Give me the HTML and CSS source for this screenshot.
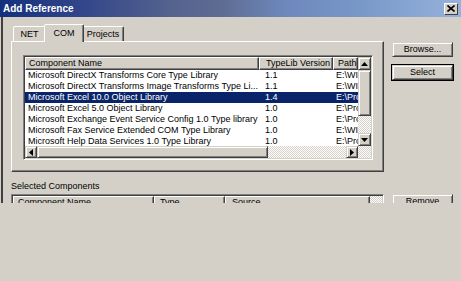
FILE: index.html
```html
<!DOCTYPE html>
<html>
<head>
<meta charset="utf-8">
<link rel="stylesheet" href="styles.css">
</head>
<body>
<div class="dialog">
  <div class="titlebar">
    <span class="title">Add Reference</span>
    <span class="close"><svg width="8" height="7" viewBox="0 0 8 7"><path d="M0.5 0.5 L7.5 6.5 M7.5 0.5 L0.5 6.5" stroke="#000" stroke-width="1.6"/></svg></span>
  </div>
  <div class="body">
    <div class="top">
      <div class="tabctl">
        <div class="tabstrip">
          <div class="tab t-net">NET</div>
          <div class="tab t-com sel">COM</div>
          <div class="tab t-proj">Projects</div>
        </div>
        <div class="panel">
          <div class="listview">
            <div class="lv-main">
              <div class="lv-cols">
                <div class="hdr">
                  <div class="hcell c-name">Component Name</div>
                  <div class="hcell c-ver">TypeLib Version</div>
                  <div class="hcell c-path">Path</div>
                </div>
                <div class="rows">
                  <div class="row"><div class="cell c-name">Microsoft DirectX Transforms Core Type Library</div><div class="cell c-ver">1.1</div><div class="cell c-path">E:\WINNT\System32</div></div>
                  <div class="row"><div class="cell c-name">Microsoft DirectX Transforms Image Transforms Type Li...</div><div class="cell c-ver">1.1</div><div class="cell c-path">E:\WINNT\System32</div></div>
                  <div class="row selected"><div class="cell c-name">Microsoft Excel 10.0 Object Library</div><div class="cell c-ver">1.4</div><div class="cell c-path">E:\Program Files</div></div>
                  <div class="row"><div class="cell c-name">Microsoft Excel 5.0 Object Library</div><div class="cell c-ver">1.0</div><div class="cell c-path">E:\Program Files</div></div>
                  <div class="row"><div class="cell c-name">Microsoft Exchange Event Service Config 1.0 Type library</div><div class="cell c-ver">1.0</div><div class="cell c-path">E:\Program Files</div></div>
                  <div class="row"><div class="cell c-name">Microsoft Fax Service Extended COM Type Library</div><div class="cell c-ver">1.0</div><div class="cell c-path">E:\WINNT\System32</div></div>
                  <div class="row"><div class="cell c-name">Microsoft Help Data Services 1.0 Type Library</div><div class="cell c-ver">1.0</div><div class="cell c-path">E:\Program Files</div></div>
                </div>
              </div>
              <div class="vscroll">
                <div class="sbtn"><svg width="7" height="4" viewBox="0 0 7 4"><path d="M0 4 L3.5 0 L7 4 Z" fill="#000"/></svg></div>
                <div class="vthumb"></div>
                <div class="track"></div>
                <div class="sbtn"><svg width="7" height="4" viewBox="0 0 7 4"><path d="M0 0 L3.5 4 L7 0 Z" fill="#000"/></svg></div>
              </div>
            </div>
            <div class="hs-row">
              <div class="hscroll">
                <div class="sbtn hbtn"><svg width="4" height="7" viewBox="0 0 4 7"><path d="M4 0 L0 3.5 L4 7 Z" fill="#000"/></svg></div>
                <div class="hthumb"></div>
                <div class="track"></div>
                <div class="sbtn hbtn"><svg width="4" height="7" viewBox="0 0 4 7"><path d="M0 0 L4 3.5 L0 7 Z" fill="#000"/></svg></div>
              </div>
              <div class="corner track"></div>
            </div>
          </div>
        </div>
      </div>
      <div class="buttons">
        <div class="btn">Browse...</div>
        <div class="btn default">Select</div>
      </div>
    </div>
    <div class="bottom">
      <div class="sel-col">
        <div class="label">Selected Components</div>
        <div class="list2">
          <div class="hdr2">
            <div class="hcell s-name">Component Name</div>
            <div class="hcell s-type">Type</div>
            <div class="hcell s-src">Source</div>
            <div class="s-rest track"></div>
          </div>
        </div>
      </div>
      <div class="buttons2">
        <div class="btn">Remove</div>
      </div>
    </div>
  </div>
</div>
</body>
</html>
```
FILE: styles.css
```css
* { box-sizing: border-box; }
html, body { margin: 0; padding: 0; }
body {
  width: 461px;
  height: 281px;
  overflow: hidden;
  background: #d4d0c8;
  font-family: "Liberation Sans", Arial, sans-serif;
  font-size: 9px;
  color: #000;
}
.dialog { height: 203px; overflow: hidden; }

.titlebar {
  height: 17px;
  display: flex;
  align-items: center;
  justify-content: space-between;
  padding: 0 3px 0 3px;
  background: linear-gradient(90deg, #14307c 0%, #33468a 18%, #55648e 38%, #5e6c92 48%, #6e88bc 62%, #7898c8 78%, #96b2dc 100%);
}
.title { color: #fff; font-weight: bold; font-size: 10px; line-height: 12px; }
.close {
  width: 14px;
  height: 12px;
  background: #d4d0c8;
  border: 1px solid;
  border-color: #fff #404040 #404040 #fff;
  display: flex;
  align-items: center;
  justify-content: center;
}

.body {
  height: 186px;
  margin-left: 1px;
  border-left: 2px solid #404040;
}
.top { display: flex; padding: 7px 0 0 8px; }
.tabctl { width: 373px; }

.tabstrip {
  display: flex;
  align-items: flex-end;
  height: 17px;
  padding-left: 2px;
  position: relative;
  z-index: 1;
}
.tab {
  height: 15px;
  border: 1px solid;
  border-bottom: none;
  border-color: #fff #404040 transparent #fff;
  border-radius: 2px 2px 0 0;
  box-shadow: inset -1px 0 #808080;
  background: #d4d0c8;
  display: flex;
  align-items: center;
  justify-content: center;
  line-height: 11px;
}
.t-net { width: 33px; }
.t-com { width: 36px; }
.t-proj { width: 42px; }
.tab.sel {
  width: 40px;
  height: 18px;
  margin: 0 -2px -1px;
  padding-bottom: 1px;
  position: relative;
  z-index: 2;
}

.panel {
  height: 131px;
  border: 1px solid;
  border-color: #fff #404040 #404040 #fff;
  box-shadow: inset -1px -1px #808080;
  padding: 13px 0 0 11px;
}

.listview {
  width: 350px;
  height: 105px;
  border: 1px solid;
  border-color: #808080 #fff #fff #808080;
  box-shadow: inset 1px 1px #404040, inset -1px -1px #d4d0c8;
  padding: 1px;
  display: flex;
  flex-direction: column;
}
.lv-main { display: flex; height: 89px; }
.lv-cols {
  width: 333px;
  display: flex;
  flex-direction: column;
  background: #fff;
  overflow: hidden;
}
.hdr { display: flex; height: 13px; flex: none; background: #d4d0c8; }
.hcell {
  height: 13px;
  border: 1px solid;
  border-color: #fff #404040 #404040 #fff;
  box-shadow: inset -1px -1px #808080;
  padding-left: 3px;
  line-height: 11px;
  white-space: nowrap;
  overflow: hidden;
  background: #d4d0c8;
}
.c-name { width: 234px; flex: none; }
.c-ver { width: 74px; flex: none; padding-left: 6px; }
.c-path { width: 25px; flex: none; padding-left: 4px; }
.rows { height: 76px; overflow: hidden; }
.row { display: flex; height: 11px; line-height: 11px; }
.cell { white-space: nowrap; overflow: hidden; padding-left: 3px; }
.row .c-ver { padding-left: 6px; }
.row .c-path { padding-left: 3px; }
.row.selected { background: #0a246a; color: #fff; }

.raised, .sbtn, .vthumb, .hthumb, .btn {
  background: #d4d0c8;
  border: 1px solid;
  border-color: #d4d0c8 #404040 #404040 #d4d0c8;
  box-shadow: inset 1px 1px #fff, inset -1px -1px #808080;
}
.track {
  background-color: #d4d0c8;
  background-image: repeating-conic-gradient(#fff 0 25%, #d4d0c8 0 50%);
  background-size: 2px 2px;
}
.vscroll { width: 13px; display: flex; flex-direction: column; }
.sbtn {
  width: 13px;
  height: 13px;
  flex: none;
  display: flex;
  align-items: center;
  justify-content: center;
}
.vthumb { height: 46px; flex: none; }
.vscroll .track { flex: 1; }

.hs-row { display: flex; height: 12px; }
.hscroll { width: 333px; display: flex; }
.hbtn { width: 12px; height: 12px; }
.hthumb { width: 231px; height: 12px; flex: none; }
.hscroll .track { flex: 1; }
.corner { width: 13px; }

.buttons {
  margin-left: 8px;
  margin-top: 18px;
  display: flex;
  flex-direction: column;
  gap: 8px;
}
.btn {
  width: 61px;
  height: 15px;
  display: flex;
  align-items: center;
  justify-content: center;
  line-height: 11px;
}
.btn.default { outline: 1px solid #000; }

.bottom { display: flex; padding-left: 8px; margin-top: 9px; }
.sel-col { width: 373px; }
.label { height: 11px; line-height: 11px; margin-bottom: 2px; }
.list2 {
  height: 30px;
  border: 1px solid;
  border-color: #808080 #fff #fff #808080;
  box-shadow: inset 1px 1px #404040, inset -1px -1px #d4d0c8;
  padding: 1px;
  background: #fff;
}
.hdr2 { display: flex; height: 13px; }
.s-name { width: 141px; flex: none; padding-left: 4px; }
.s-type { width: 71px; flex: none; padding-left: 5px; }
.s-src { width: 145px; flex: none; padding-left: 6px; }
.s-rest { flex: 1; height: 13px; }
.buttons2 { margin-left: 8px; margin-top: 13px; }
```
